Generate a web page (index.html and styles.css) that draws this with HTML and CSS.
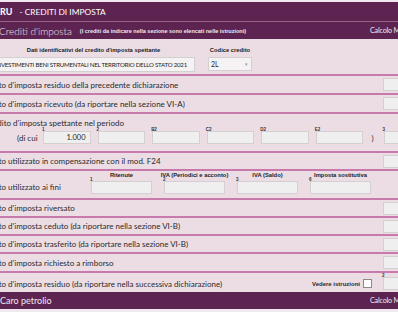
FILE: index.html
```html
<!DOCTYPE html>
<html lang="it">
<head>
<meta charset="utf-8">
<title>RU - Crediti di imposta</title>
<link rel="stylesheet" href="styles.css">
</head>
<body>
<div class="page">
  <div class="hdr1"><b>RU</b><span class="title">- CREDITI DI IMPOSTA</span></div>
  <div class="rule"></div>
  <div class="hdr2">
    <span class="name">Crediti d'imposta</span>
    <span class="note">(I crediti da indicare nella sezione sono elencati nelle istruzioni)</span>
    <span class="calc">Calcolo M</span>
  </div>
  <div class="section">
    <div class="dati">
      <div class="col-long">
        <div class="cap">Dati identificativi del credito d'imposta spettante</div>
        <div class="box long">INVESTIMENTI BENI STRUMENTALI NEL TERRITORIO DELLO STATO 2021</div>
      </div>
      <div class="col-code">
        <div class="cap">Codice credito</div>
        <div class="box select"><span>2L</span><span class="arrow">&#9662;</span></div>
      </div>
    </div>

    <div class="row h19">
      <span class="lbl">Credito d'imposta residuo della precedente dichiarazione</span>
      <span class="fld end"><span class="box"></span></span>
    </div>
    <div class="row h19">
      <span class="lbl">Credito d'imposta ricevuto (da riportare nella sezione VI-A)</span>
      <span class="fld end"><span class="box"></span></span>
    </div>
    <div class="row h39 spett">
      <div class="lbl lbl-top">Credito d'imposta spettante nel periodo</div>
      <div class="dicui">
        <span class="dc">(di cui</span>
        <span class="fld w48"><i class="num">1</i><span class="box val">1.000</span></span>
        <span class="fld w48"><i class="num">2</i><span class="box"></span></span>
        <span class="fld w48"><i class="num">B2</i><span class="box"></span></span>
        <span class="fld w48"><i class="num">C2</i><span class="box"></span></span>
        <span class="fld w48"><i class="num">D2</i><span class="box"></span></span>
        <span class="fld w48"><i class="num">E2</i><span class="box"></span></span>
        <span class="paren">)</span>
        <span class="fld end"><i class="num">3</i><span class="box"></span></span>
      </div>
    </div>
    <div class="row h18">
      <span class="lbl">Credito utilizzato in compensazione con il mod. F24</span>
      <span class="fld end"><span class="box"></span></span>
    </div>
    <div class="row h29 fini">
      <span class="lbl">Credito utilizzato ai fini</span>
      <div class="cols">
        <div class="c"><div class="cap">Ritenute</div><span class="fld"><i class="num">1</i><span class="box"></span></span></div>
        <div class="c"><div class="cap">IVA (Periodici e acconto)</div><span class="fld"><i class="num">2</i><span class="box"></span></span></div>
        <div class="c"><div class="cap">IVA (Saldo)</div><span class="fld"><i class="num">3</i><span class="box"></span></span></div>
        <div class="c"><div class="cap">Imposta sostitutiva</div><span class="fld"><i class="num">6</i><span class="box"></span></span></div>
      </div>
    </div>
    <div class="row h18">
      <span class="lbl">Credito d'imposta riversato</span>
      <span class="fld end"><span class="box"></span></span>
    </div>
    <div class="row h18">
      <span class="lbl">Credito d'imposta ceduto (da riportare nella sezione VI-B)</span>
      <span class="fld end"><span class="box"></span></span>
    </div>
    <div class="row h18">
      <span class="lbl">Credito d'imposta trasferito (da riportare nella sezione VI-B)</span>
      <span class="fld end"><span class="box"></span></span>
    </div>
    <div class="row h19">
      <span class="lbl">Credito d'imposta richiesto a rimborso</span>
      <span class="fld end"><span class="box"></span></span>
    </div>
    <div class="row h19 last">
      <span class="lbl">Credito d'imposta residuo (da riportare nella successiva dichiarazione)</span>
      <span class="vedi">Vedere istruzioni</span>
      <span class="check"></span>
      <span class="fld end2"><i class="num">2</i><span class="box"></span></span>
    </div>
  </div>
  <div class="hdr2 hdr3">
    <span class="name">Caro petrolio</span>
    <span class="calc">Calcolo M</span>
  </div>
</div>
</body>
</html>
```

FILE: styles.css
```css
* { box-sizing: border-box; }
html, body { margin: 0; padding: 0; }
body {
  width: 398px;
  height: 312px;
  overflow: hidden;
  background: #f2e9ee;
  font-family: Lato, "Liberation Sans", sans-serif;
  color: #2a2a2a;
}
.page { width: 450px; padding-top: 2px; }

.hdr1 {
  height: 19px;
  background: #5e2451;
  color: #fff;
  display: flex;
  align-items: center;
  font-size: 8.4px;
}
.hdr1 b { font-size: 9px; font-weight: 700; }
.hdr1 .title { margin-left: 7px; }
.rule { height: 1px; background: #93648b; }

.hdr2 {
  height: 17px;
  background: #5e2451;
  color: #f1e8ef;
  display: flex;
  align-items: center;
}
.hdr2 .name { font-size: 10px; margin-left: -1px; font-weight: 300; }
.hdr2 .note {
  font-family: "Liberation Sans", sans-serif;
  font-weight: 700;
  font-size: 5.5px;
  margin-left: 8px;
}
.hdr2 .calc {
  margin-left: auto;
  width: 80px;
  font-size: 7.2px;
  letter-spacing: -0.2px;
  white-space: nowrap;
}

.section { background: #ecdde5; }

.cap {
  font-family: "Liberation Sans", sans-serif;
  font-weight: 700;
  font-size: 5.8px;
  line-height: 6px;
  color: #222;
  display: flex;
  justify-content: center;
  white-space: nowrap;
}

.box {
  display: block;
  height: 13px;
  background: #efefef;
  border: 1px solid #d4d0d2;
}

.dati {
  height: 37px;
  display: flex;
  gap: 13px;
  padding-top: 8px;
  border-bottom: 2px solid #c77aab;
}
.col-long { margin-left: -8px; width: 203px; display: flex; flex-direction: column; gap: 4px; }
.col-code { width: 44px; display: flex; flex-direction: column; gap: 4px; }
.box.long {
  height: 15px;
  font-size: 6.1px;
  letter-spacing: -0.22px;
  line-height: 13px;
  padding-left: 2px;
  color: #222;
  white-space: nowrap;
  overflow: hidden;
  background: #f4f2f3;
}
.box.select {
  height: 14px;
  display: flex;
  align-items: center;
  justify-content: space-between;
  padding: 0 3px 0 2px;
  font-size: 7px;
  background: #f4f2f3;
}
.arrow { font-size: 5px; color: #999; }

.row {
  display: flex;
  align-items: center;
  border-bottom: 2px solid #c77aab;
  padding-right: 7px;
}
.h18 { height: 18px; }
.h19 { height: 19px; }
.h29 { height: 29px; }
.h39 { height: 39px; }
.row.last { border-bottom: 0; }

.lbl {
  font-size: 8px;
  white-space: nowrap;
  margin-left: -20px;
}

.fld { position: relative; display: block; }
.fld .box { height: 13px; }
.fld.end { margin-left: auto; width: 60px; }
.num {
  position: absolute;
  left: -1px;
  top: -4px;
  font-style: normal;
  font-family: "Liberation Sans", sans-serif;
  font-size: 4.5px;
  font-weight: 700;
  line-height: 5px;
  color: #333;
}
.w48 { width: 48px; }
.box.val {
  font-size: 7.5px;
  line-height: 11px;
  text-align: right;
  padding-right: 4px;
}

.spett { flex-direction: column; align-items: stretch; justify-content: flex-start; padding-top: 4px; }
.lbl-top { margin-left: -15px; line-height: 10px; }
.dicui {
  display: flex;
  align-items: center;
  gap: 7px;
  margin-top: 3px;
  padding-left: 17px;
}
.dc { font-size: 8px; width: 19px; white-space: nowrap; }
.paren { font-size: 8px; margin-left: 1px; }
.dicui .fld.end { margin-left: 3px; }

.fini { align-items: center; }
.fini .lbl { width: 111px; flex: none; padding-top: 4px; }
.cols {
  display: grid;
  grid-template-columns: repeat(4, 61px);
  column-gap: 12px;
  margin-top: -3px;
}
.cols .c { display: flex; flex-direction: column; gap: 3px; }

.last { padding-top: 2px; }
.vedi {
  margin-left: auto;
  font-family: "Liberation Sans", sans-serif;
  font-weight: 700;
  font-size: 6px;
}
.check {
  width: 9px;
  height: 9px;
  background: #fff;
  border: 1px solid #8a8a8a;
  margin-left: 3px;
}
.fld.end2 { width: 60px; margin-left: 11px; }

.hdr3 { height: 17px; }
.hdr3 .name { font-weight: 400; font-size: 9px; margin-left: 0; }
```
